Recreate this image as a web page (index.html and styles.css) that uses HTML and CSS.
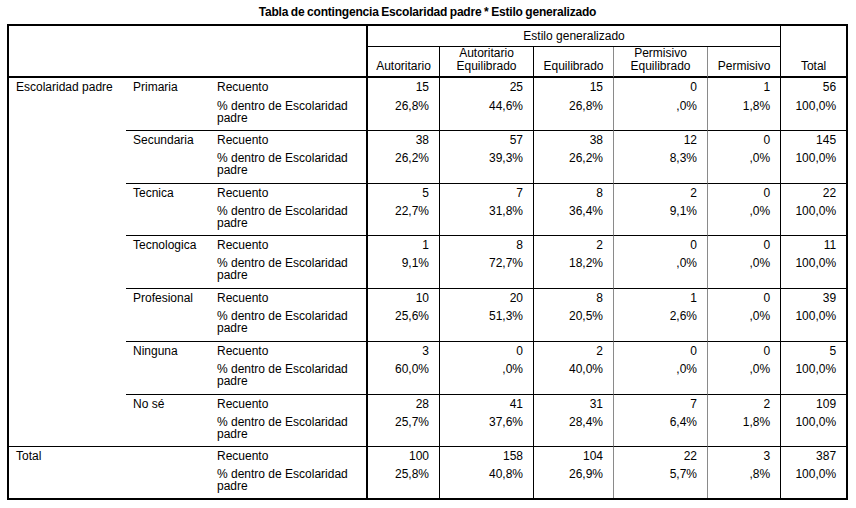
FILE: index.html
```html
<!DOCTYPE html>
<html lang="es">
<head>
<meta charset="utf-8">
<title>Tabla de contingencia</title>
<link rel="stylesheet" href="styles.css">
</head>
<body>
<div class="wrap">
  <div class="title">Tabla de contingencia Escolaridad padre * Estilo generalizado</div>
  <table class="ct">
    <colgroup>
      <col class="c1"><col class="c2"><col class="c3">
      <col class="ca"><col class="cb"><col class="cc"><col class="cd"><col class="ce"><col class="ct9">
    </colgroup>
    <thead>
      <tr class="h1">
        <th class="corner" colspan="3" rowspan="2"></th>
        <th class="span" colspan="5">Estilo generalizado</th>
        <th class="tot" rowspan="2">Total</th>
      </tr>
      <tr class="h2">
        <th class="a">Autoritario</th>
        <th class="b">Autoritario<br>Equilibrado</th>
        <th class="c">Equilibrado</th>
        <th class="d">Permisivo<br>Equilibrado</th>
        <th class="e">Permisivo</th>
      </tr>
    </thead>
    <tbody>
      <tr class="r">
        <td class="var" rowspan="14">Escolaridad padre</td>
        <td class="cat" rowspan="2">Primaria</td>
        <td class="stat">Recuento</td>
        <td class="n a">15</td><td class="n b">25</td><td class="n c">15</td><td class="n d">0</td><td class="n e">1</td><td class="n t">56</td>
      </tr>
      <tr class="p">
        <td class="stat">% dentro de Escolaridad padre</td>
        <td class="n a">26,8%</td><td class="n b">44,6%</td><td class="n c">26,8%</td><td class="n d">,0%</td><td class="n e">1,8%</td><td class="n t">100,0%</td>
      </tr>

      <tr class="r g">
        <td class="cat" rowspan="2">Secundaria</td>
        <td class="stat">Recuento</td>
        <td class="n a">38</td><td class="n b">57</td><td class="n c">38</td><td class="n d">12</td><td class="n e">0</td><td class="n t">145</td>
      </tr>
      <tr class="p tall">
        <td class="stat">% dentro de Escolaridad padre</td>
        <td class="n a">26,2%</td><td class="n b">39,3%</td><td class="n c">26,2%</td><td class="n d">8,3%</td><td class="n e">,0%</td><td class="n t">100,0%</td>
      </tr>

      <tr class="r g">
        <td class="cat" rowspan="2">Tecnica</td>
        <td class="stat">Recuento</td>
        <td class="n a">5</td><td class="n b">7</td><td class="n c">8</td><td class="n d">2</td><td class="n e">0</td><td class="n t">22</td>
      </tr>
      <tr class="p">
        <td class="stat">% dentro de Escolaridad padre</td>
        <td class="n a">22,7%</td><td class="n b">31,8%</td><td class="n c">36,4%</td><td class="n d">9,1%</td><td class="n e">,0%</td><td class="n t">100,0%</td>
      </tr>

      <tr class="r g">
        <td class="cat" rowspan="2">Tecnologica</td>
        <td class="stat">Recuento</td>
        <td class="n a">1</td><td class="n b">8</td><td class="n c">2</td><td class="n d">0</td><td class="n e">0</td><td class="n t">11</td>
      </tr>
      <tr class="p tall">
        <td class="stat">% dentro de Escolaridad padre</td>
        <td class="n a">9,1%</td><td class="n b">72,7%</td><td class="n c">18,2%</td><td class="n d">,0%</td><td class="n e">,0%</td><td class="n t">100,0%</td>
      </tr>

      <tr class="r g">
        <td class="cat" rowspan="2">Profesional</td>
        <td class="stat">Recuento</td>
        <td class="n a">10</td><td class="n b">20</td><td class="n c">8</td><td class="n d">1</td><td class="n e">0</td><td class="n t">39</td>
      </tr>
      <tr class="p tall">
        <td class="stat">% dentro de Escolaridad padre</td>
        <td class="n a">25,6%</td><td class="n b">51,3%</td><td class="n c">20,5%</td><td class="n d">2,6%</td><td class="n e">,0%</td><td class="n t">100,0%</td>
      </tr>

      <tr class="r g">
        <td class="cat" rowspan="2">Ninguna</td>
        <td class="stat">Recuento</td>
        <td class="n a">3</td><td class="n b">0</td><td class="n c">2</td><td class="n d">0</td><td class="n e">0</td><td class="n t">5</td>
      </tr>
      <tr class="p tall">
        <td class="stat">% dentro de Escolaridad padre</td>
        <td class="n a">60,0%</td><td class="n b">,0%</td><td class="n c">40,0%</td><td class="n d">,0%</td><td class="n e">,0%</td><td class="n t">100,0%</td>
      </tr>

      <tr class="r g">
        <td class="cat" rowspan="2">No sé</td>
        <td class="stat">Recuento</td>
        <td class="n a">28</td><td class="n b">41</td><td class="n c">31</td><td class="n d">7</td><td class="n e">2</td><td class="n t">109</td>
      </tr>
      <tr class="p">
        <td class="stat">% dentro de Escolaridad padre</td>
        <td class="n a">25,7%</td><td class="n b">37,6%</td><td class="n c">28,4%</td><td class="n d">6,4%</td><td class="n e">1,8%</td><td class="n t">100,0%</td>
      </tr>

      <tr class="r g">
        <td class="var tv" colspan="2" rowspan="2">Total</td>
        <td class="stat">Recuento</td>
        <td class="n a">100</td><td class="n b">158</td><td class="n c">104</td><td class="n d">22</td><td class="n e">3</td><td class="n t">387</td>
      </tr>
      <tr class="p">
        <td class="stat">% dentro de Escolaridad padre</td>
        <td class="n a">25,8%</td><td class="n b">40,8%</td><td class="n c">26,9%</td><td class="n d">5,7%</td><td class="n e">,8%</td><td class="n t">100,0%</td>
      </tr>
    </tbody>
  </table>
</div>
</body>
</html>
```

FILE: styles.css
```css
html, body {
  margin: 0;
  padding: 0;
  background: #fff;
}

body {
  font-family: "Liberation Sans", Arial, sans-serif;
  font-size: 12px;
  color: #000;
}

.wrap {
  width: 841px;
  margin-left: 7px;
}

.title {
  height: 24px;
  line-height: 25px;
  text-align: center;
  font-weight: bold;
  font-size: 12px;
  letter-spacing: -0.2px;
  word-spacing: -0.5px;
}

.ct {
  table-layout: fixed;
  border-collapse: separate;
  border-spacing: 0;
  border: 2px solid #000;
  width: 841px;
  font-size: 12px;
  line-height: 13px;
}

.c1 { width: 117px; }
.c2 { width: 84px; }
.c3 { width: 158px; }
.ca { width: 72px; }
.cb { width: 94px; }
.cc { width: 80px; }
.cd { width: 94px; }
.ce { width: 73px; }
.ct9 { width: 65px; }

th, td {
  padding: 0;
  font-weight: normal;
}

/* header */
.h1 { height: 21px; }
.h2 { height: 31px; }

.corner {
  border-right: 2px solid #000;
  border-bottom: 2px solid #000;
}

.span {
  border-right: 1px solid #000;
  border-bottom: 1px solid #000;
  text-align: center;
  vertical-align: middle;
}

.tot {
  border-bottom: 2px solid #000;
  vertical-align: bottom;
  text-align: center;
  padding-bottom: 3px;
}

.h2 th {
  border-bottom: 2px solid #000;
  vertical-align: bottom;
  text-align: center;
  padding-bottom: 3px;
}

/* column rules */
.a, .b, .e { border-right: 1px solid #000; }
.c, .d { border-right: 1px solid #8a8a8a; }

/* body */
td {
  vertical-align: top;
  text-align: left;
  padding-left: 7px;
  line-height: 12px;
}

.r { height: 20px; }
.r td { padding-top: 3px; }
.p { height: 32px; }
.p.tall { height: 33px; }
.p td { padding-top: 2px; }

.var { padding-top: 3px; }

.stat {
  border-right: 2px solid #000;
  padding-right: 6px;
}

.n {
  text-align: right;
  padding-left: 0;
  padding-right: 10px;
}

.g td { border-top: 1px solid #000; }
.g .c, .g .d { border-top-color: #000; }
```
